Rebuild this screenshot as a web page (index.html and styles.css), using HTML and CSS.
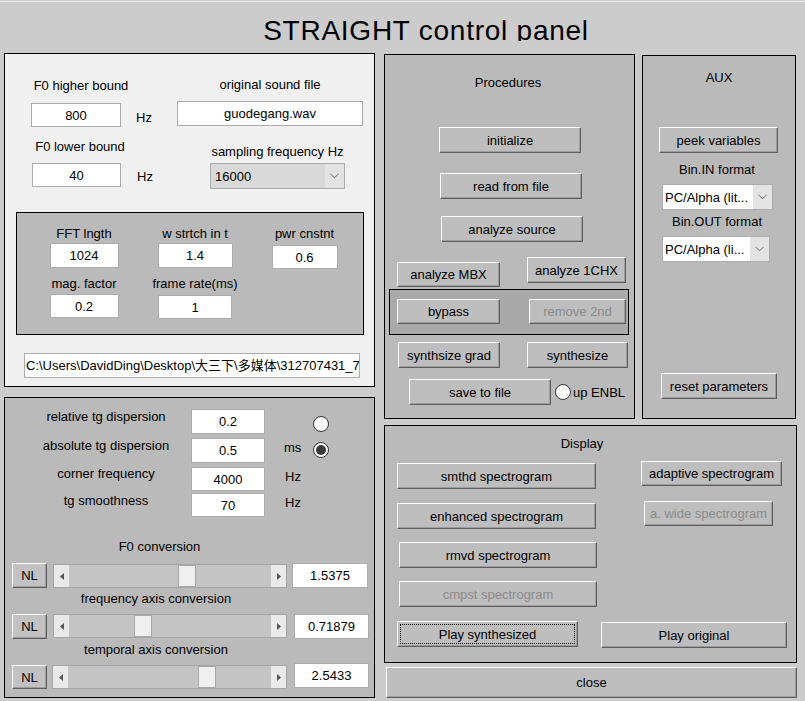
FILE: index.html
```html
<!DOCTYPE html>
<html>
<head>
<meta charset="utf-8">
<link rel="stylesheet" href="styles.css">
</head>
<body>
<div class="page">
  <div class="topline"></div>
  <div class="titlebar"><div class="title">STRAIGHT control panel</div></div>
  <div class="main">
    <div class="leftcol">
      <section class="panel panel-light p-file">
        <div class="fileblock">
          <div class="colA">
            <div class="lbl l-f0hi">F0 higher bound</div>
            <div class="row r-f0hi"><div class="edit e-f0">800</div><div class="unit u-hz1">Hz</div></div>
            <div class="lbl l-f0lo">F0 lower bound</div>
            <div class="row r-f0lo"><div class="edit e-f0lo">40</div><div class="unit u-hz2">Hz</div></div>
          </div>
          <div class="colB">
            <div class="lbl l-orig">original sound file</div>
            <div class="edit e-orig">guodegang.wav</div>
            <div class="lbl l-fs">sampling frequency Hz</div>
            <div class="select s-fs"><span class="sel-text">16000</span><span class="sel-arrow"><svg width="9" height="6" viewBox="0 0 9 6"><polyline points="0.5,0.8 4.5,4.8 8.5,0.8" fill="none" stroke="#6a6a6a" stroke-width="1"/></svg></span></div>
          </div>
        </div>
        <div class="panel panel-gray p-fft">
          <div class="cell"><div class="lbl">FFT lngth</div><div class="edit e-fft">1024</div></div>
          <div class="cell"><div class="lbl">w strtch in t</div><div class="edit e-wst">1.4</div></div>
          <div class="cell"><div class="lbl">pwr cnstnt</div><div class="edit e-pwr">0.6</div></div>
          <div class="cell"><div class="lbl">mag. factor</div><div class="edit e-mag">0.2</div></div>
          <div class="cell"><div class="lbl">frame rate(ms)</div><div class="edit e-frm">1</div></div>
        </div>
        <div class="edit e-path">C:\Users\DavidDing\Desktop\大三下\多媒体\312707431_7</div>
      </section>

      <section class="panel panel-gray p-tg">
        <div class="tg-row">
          <div class="lbl tg-lbl">relative tg dispersion</div>
          <div class="edit e-tg1">0.2</div>
          <div class="radio r1"></div>
        </div>
        <div class="tg-row tg-r2">
          <div class="lbl tg-lbl">absolute tg dispersion</div>
          <div class="edit e-tg">0.5</div>
          <div class="unit u-ms">ms</div>
          <div class="radio checked r2"></div>
        </div>
        <div class="tg-row tg-r3">
          <div class="lbl tg-lbl">corner frequency</div>
          <div class="edit e-tg e-tg3">4000</div>
          <div class="unit u-hz3">Hz</div>
        </div>
        <div class="tg-row tg-r4">
          <div class="lbl tg-lbl">tg smoothness</div>
          <div class="edit e-tg e-tg4">70</div>
          <div class="unit u-hz4">Hz</div>
        </div>
        <div class="lbl f0conv">F0 conversion</div>
        <div class="sl-row sl-r1">
          <div class="btn nl">NL</div>
          <div class="slider"><span class="sl-arr"><svg width="4" height="7" viewBox="0 0 4 7"><polygon points="4,0 0,3.5 4,7" fill="#555"/></svg></span><span class="sl-track"><span class="thumb" style="margin-left:109px"></span></span><span class="sl-arr"><svg width="4" height="7" viewBox="0 0 4 7"><polygon points="0,0 4,3.5 0,7" fill="#555"/></svg></span></div>
          <div class="edit val">1.5375</div>
        </div>
        <div class="lbl axlbl">frequency axis conversion</div>
        <div class="sl-row sl-r2">
          <div class="btn nl">NL</div>
          <div class="slider"><span class="sl-arr"><svg width="4" height="7" viewBox="0 0 4 7"><polygon points="4,0 0,3.5 4,7" fill="#555"/></svg></span><span class="sl-track"><span class="thumb" style="margin-left:65px"></span></span><span class="sl-arr"><svg width="4" height="7" viewBox="0 0 4 7"><polygon points="0,0 4,3.5 0,7" fill="#555"/></svg></span></div>
          <div class="edit val val2">0.71879</div>
        </div>
        <div class="lbl axlbl">temporal axis conversion</div>
        <div class="sl-row sl-r3">
          <div class="btn nl nl3">NL</div>
          <div class="slider sl3"><span class="sl-arr"><svg width="4" height="7" viewBox="0 0 4 7"><polygon points="4,0 0,3.5 4,7" fill="#555"/></svg></span><span class="sl-track"><span class="thumb" style="margin-left:130px"></span></span><span class="sl-arr"><svg width="4" height="7" viewBox="0 0 4 7"><polygon points="0,0 4,3.5 0,7" fill="#555"/></svg></span></div>
          <div class="edit val val3">2.5433</div>
        </div>
      </section>
    </div>

    <div class="rightcol">
      <div class="r-top">
        <section class="panel panel-gray p-proc">
          <div class="lbl proc-title">Procedures</div>
          <div class="btn b-init">initialize</div>
          <div class="btn b-read">read from file</div>
          <div class="btn b-src">analyze source</div>
          <div class="row proc-row1">
            <div class="btn b-mbx">analyze MBX</div>
            <div class="btn b-1chx">analyze 1CHX</div>
          </div>
          <div class="subpanel">
            <div class="btn b-bypass">bypass</div>
            <div class="btn disabled b-rm">remove 2nd</div>
          </div>
          <div class="row proc-row2">
            <div class="btn b-sgrad">synthsize grad</div>
            <div class="btn b-synth">synthesize</div>
          </div>
          <div class="row proc-row3">
            <div class="btn b-save">save to file</div>
            <div class="radio r-up"></div>
            <div class="lbl up">up ENBL</div>
          </div>
        </section>
        <section class="panel panel-gray p-aux">
          <div class="lbl aux-title">AUX</div>
          <div class="btn b-peek">peek variables</div>
          <div class="lbl bin-lbl">Bin.IN format</div>
          <div class="select white s-in"><span class="sel-text">PC/Alpha (lit...</span><span class="sel-arrow"><svg width="9" height="6" viewBox="0 0 9 6"><polyline points="0.5,0.8 4.5,4.8 8.5,0.8" fill="none" stroke="#6a6a6a" stroke-width="1"/></svg></span></div>
          <div class="lbl bin-lbl bin-lbl2">Bin.OUT format</div>
          <div class="select white s-out"><span class="sel-text">PC/Alpha (li...</span><span class="sel-arrow"><svg width="9" height="6" viewBox="0 0 9 6"><polyline points="0.5,0.8 4.5,4.8 8.5,0.8" fill="none" stroke="#6a6a6a" stroke-width="1"/></svg></span></div>
          <div class="btn b-reset">reset parameters</div>
        </section>
      </div>
      <section class="panel panel-gray p-disp">
        <div class="lbl disp-title">Display</div>
        <div class="disp-cols">
          <div class="disp-left">
            <div class="btn b-smthd">smthd spectrogram</div>
            <div class="btn b-enh">enhanced spectrogram</div>
            <div class="btn b-rmvd">rmvd spectrogram</div>
            <div class="btn disabled b-cmpst">cmpst spectrogram</div>
          </div>
          <div class="disp-right">
            <div class="btn b-adapt">adaptive spectrogram</div>
            <div class="btn disabled b-awide">a. wide spectrogram</div>
          </div>
        </div>
        <div class="row disp-bottom">
          <div class="btn focus b-plays">Play synthesized</div>
          <div class="btn b-playo">Play original</div>
        </div>
      </section>
      <div class="btn b-close">close</div>
    </div>
  </div>
</div>
</body>
</html>
```

FILE: styles.css
```css
* { box-sizing: border-box; }

body {
  margin: 0;
  background: #cccccc;
  font-family: "Liberation Sans", Arial, "Noto Sans CJK SC", sans-serif;
  font-size: 13px;
  line-height: 15px;
  color: #000;
}

.page { width: 805px; height: 701px; overflow: hidden; }

.topline { height: 1px; margin-top: 1px; background: #f0f0f0; }

.titlebar { height: 51px; padding-top: 15px; }
.title {
  height: 24px;
  overflow: hidden;
  margin-left: 47px;
  text-align: center;
  font-size: 28px;
  line-height: 28px;
  letter-spacing: 0.75px;
  white-space: nowrap;
}

.main { display: flex; align-items: flex-start; padding-left: 4px; }
.leftcol { width: 371px; display: flex; flex-direction: column; gap: 10px; }
.rightcol { margin-left: 9px; margin-top: 1px; width: 413px; }

.panel { border: 1px solid #000; }
.panel-light { background: #f0f0f0; }
.panel-gray { background: #bababa; }

.lbl { white-space: nowrap; }
.unit { white-space: nowrap; }
.row { display: flex; align-items: flex-start; }

.edit {
  background: #fff;
  border: 1px solid #acacac;
  display: flex;
  align-items: center;
  justify-content: center;
  white-space: nowrap;
  line-height: 1;
}

.btn {
  background: #bebebe;
  border: 1px solid;
  border-color: #fdfdfd #5e5e5e #5e5e5e #fdfdfd;
  box-shadow: inset -1px -1px 0 #9c9c9c;
  display: flex;
  align-items: center;
  justify-content: center;
  white-space: nowrap;
  line-height: 1;
}
.btn.disabled { color: #8a8a8a; }
.btn.focus { outline: 1px dotted #000; outline-offset: -4px; }

.select {
  display: flex;
  background: #d9d9d9;
  border: 1px solid #acacac;
  line-height: 1;
}
.select.white { background: #fff; }
.sel-text { flex: 1; display: flex; align-items: center; padding-left: 4px; white-space: nowrap; overflow: hidden; }
.select.white .sel-text { padding-left: 2px; }
.sel-arrow { width: 19px; background: #e3e3e3; display: flex; align-items: center; justify-content: center; }

.radio {
  width: 16px;
  height: 16px;
  border-radius: 50%;
  background: #fff;
  border: 1px solid #333;
  display: flex;
  align-items: center;
  justify-content: center;
}
.radio.checked::after {
  content: "";
  width: 10px;
  height: 10px;
  border-radius: 50%;
  background: #3a3a3a;
}

/* ---- file panel ---- */
.p-file { height: 334px; }
.fileblock { display: flex; }
.colA { width: 172px; display: flex; flex-direction: column; align-items: flex-start; }
.colB { width: 186px; display: flex; flex-direction: column; align-items: flex-start; }

.l-f0hi { margin: 24px 0 0 26px; width: 100px; text-align: center; }
.r-f0hi { margin-top: 10px; }
.e-f0 { margin-left: 26px; width: 90px; height: 24px; }
.u-hz1 { margin: 7px 0 0 15px; }
.l-f0lo { margin: 12px 0 0 25px; width: 100px; text-align: center; }
.r-f0lo { margin-top: 9px; }
.e-f0lo { margin-left: 27px; width: 89px; height: 24px; }
.u-hz2 { margin: 6px 0 0 16px; }

.l-orig { margin-top: 23px; width: 186px; text-align: center; }
.e-orig { margin-top: 9px; width: 186px; height: 25px; }
.l-fs { margin: 18px 0 0 33px; width: 135px; text-align: center; }
.s-fs { margin: 4px 0 0 33px; width: 135px; height: 26px; }

.p-fft {
  margin: 23px 0 0 11px;
  width: 348px;
  height: 123px;
  padding-top: 13px;
  display: grid;
  grid-template-columns: 134px 88px 131px;
  grid-template-rows: 50px auto;
}
.cell { display: flex; flex-direction: column; align-items: center; }
.e-fft { margin-top: 2px; width: 69px; height: 25px; }
.e-wst { margin-top: 2px; width: 75px; height: 25px; }
.e-pwr { margin-top: 4px; width: 66px; height: 24px; }
.e-mag { margin-top: 3px; width: 69px; height: 24px; }
.e-frm { margin-top: 4px; width: 74px; height: 24px; }

.e-path {
  margin: 18px 0 0 19px;
  width: 336px;
  height: 25px;
  justify-content: flex-start;
  padding-left: 1px;
  overflow: hidden;
}

/* ---- tg panel ---- */
.p-tg { height: 301px; padding-top: 11px; }
.tg-row { display: flex; align-items: flex-start; }
.tg-lbl { margin-left: 16px; width: 170px; text-align: center; }
.e-tg1 { width: 74px; height: 25px; }
.e-tg { width: 74px; height: 25px; }
.r1 { margin: 7px 0 0 48px; }
.tg-r2 { margin-top: 4px; }
.u-ms { margin: 2px 0 0 19px; width: 29px; }
.r2 { margin-top: 4px; }
.tg-r3 { margin-top: 3px; }
.e-tg3 { margin-top: 1px; height: 24px; }
.u-hz3 { margin: 3px 0 0 20px; }
.tg-r4 { margin-top: 2px; }
.e-tg4 { height: 24px; }
.u-hz4 { margin: 2px 0 0 20px; }

.f0conv { margin-top: 22px; width: 309px; text-align: center; }
.axlbl { margin-top: 3px; width: 302px; text-align: center; }

.sl-row { display: flex; align-items: flex-start; }
.sl-r1 { margin-top: 9px; }
.sl-r2 { margin-top: 8px; }
.sl-r3 { margin-top: 6px; }
.nl { margin-left: 7px; width: 35px; height: 25px; background: #c2c2c2; }
.nl3 { margin-top: 2px; height: 24px; }

.slider {
  margin: 1px 0 0 6px;
  width: 234px;
  height: 24px;
  display: flex;
  background: #c4c4c4;
  border: 1px solid #a4a4a4;
}
.sl-r2 .slider { margin-top: 0; }
.slider.sl3 { margin: 2px 0 0 5px; width: 235px; }
.sl-arr {
  width: 15px;
  background: #e9e9e9;
  display: flex;
  align-items: center;
  justify-content: center;
}
.sl-track { flex: 1; display: flex; }
.thumb {
  width: 18px;
  background: #efefef;
  border: 1px solid #a8a8a8;
}
.val { margin-left: 5px; width: 76px; height: 25px; }
.val2, .val3 { margin-left: 7px; width: 75px; }

/* ---- right side ---- */
.r-top { display: flex; align-items: flex-start; }

.p-proc {
  width: 251px;
  height: 365px;
  padding-top: 20px;
  display: flex;
  flex-direction: column;
  align-items: flex-start;
}
.proc-title { width: 246px; text-align: center; }
.b-init { margin: 37px 0 0 54px; width: 142px; height: 26px; }
.b-read { margin: 20px 0 0 55px; width: 142px; height: 26px; }
.b-src { margin: 17px 0 0 56px; width: 142px; height: 26px; }
.proc-row1 { margin-top: 15px; }
.b-mbx { margin: 5px 0 0 12px; width: 103px; height: 25px; }
.b-1chx { margin-left: 27px; width: 99px; height: 26px; }
.subpanel {
  margin: 2px 0 0 4px;
  width: 240px;
  height: 46px;
  padding-top: 9px;
  background: #a9a9a9;
  border: 1px solid #000;
  display: flex;
  align-items: flex-start;
}
.b-bypass { margin-left: 7px; width: 103px; height: 25px; }
.b-rm { margin-left: 29px; width: 97px; height: 25px; }
.proc-row2 { margin-top: 7px; }
.b-sgrad { margin-left: 13px; width: 102px; height: 26px; }
.b-synth { margin-left: 27px; width: 101px; height: 26px; }
.proc-row3 { margin-top: 11px; }
.b-save { margin-left: 24px; width: 142px; height: 26px; }
.r-up { margin: 5px 0 0 4px; }
.up { margin: 6px 0 0 2px; }

.p-aux {
  margin: 1px 0 0 7px;
  width: 154px;
  height: 364px;
  padding-top: 14px;
  display: flex;
  flex-direction: column;
  align-items: flex-start;
}
.aux-title { width: 152px; text-align: center; }
.b-peek { margin: 42px 0 0 16px; width: 119px; height: 26px; }
.bin-lbl { margin-top: 9px; width: 148px; text-align: center; }
.bin-lbl2 { margin-top: 4px; }
.s-in { margin: 7px 0 0 19px; width: 111px; height: 26px; }
.s-out { margin: 7px 0 0 19px; width: 108px; height: 26px; }
.b-reset { margin: 111px 0 0 18px; width: 116px; height: 26px; }

.p-disp { margin-top: 6px; width: 413px; height: 238px; padding-top: 10px; }
.disp-title { width: 394px; text-align: center; }
.disp-cols { display: flex; align-items: flex-start; }
.disp-left { margin-left: 12px; width: 200px; display: flex; flex-direction: column; align-items: flex-start; }
.disp-right { margin-left: 44px; display: flex; flex-direction: column; align-items: flex-start; }
.b-smthd { margin-top: 12px; width: 199px; height: 26px; }
.b-enh { margin-top: 14px; width: 199px; height: 26px; }
.b-rmvd { margin: 13px 0 0 2px; width: 198px; height: 26px; }
.b-cmpst { margin: 13px 0 0 2px; width: 198px; height: 26px; }
.b-adapt { margin-top: 10px; width: 141px; height: 25px; }
.b-awide { margin: 15px 0 0 3px; width: 129px; height: 25px; }
.disp-bottom { margin-top: 14px; }
.b-plays { margin-left: 12px; width: 181px; height: 26px; }
.b-playo { margin: 1px 0 0 23px; width: 186px; height: 26px; }

.b-close { margin: 4px 0 0 2px; width: 411px; height: 31px; }
```
